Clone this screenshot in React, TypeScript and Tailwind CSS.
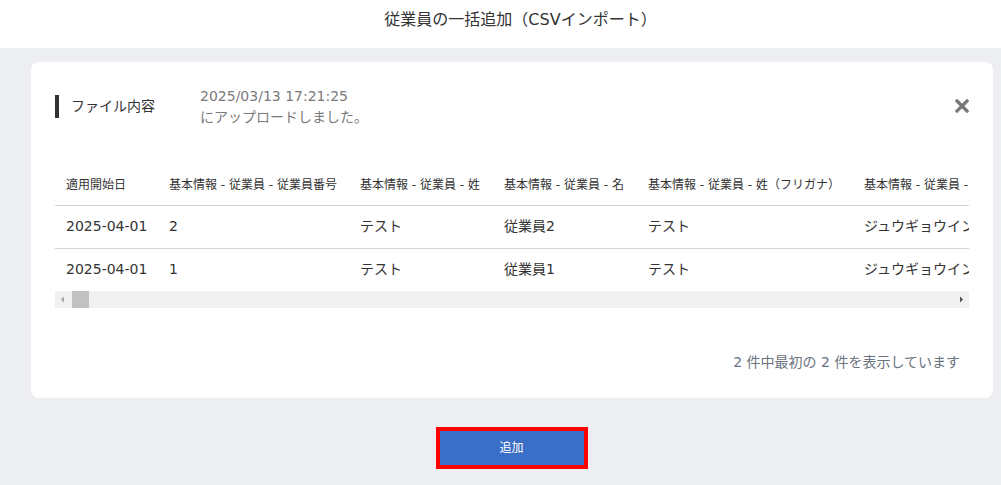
import React from 'react';

const font = { fontFamily: '"DejaVu Sans", "Noto Sans CJK JP", sans-serif' };

const columns = [
  { label: '適用開始日', w: 'w-[103px]' },
  { label: '基本情報 - 従業員 - 従業員番号', w: 'w-[191px]' },
  { label: '基本情報 - 従業員 - 姓', w: 'w-[144px]' },
  { label: '基本情報 - 従業員 - 名', w: 'w-[144px]' },
  { label: '基本情報 - 従業員 - 姓（フリガナ）', w: 'w-[216px]' },
  { label: '基本情報 - 従業員 - 名（フリガナ）', w: 'w-[216px]' },
];

const rows = [
  ['2025-04-01', '2', 'テスト', '従業員2', 'テスト', 'ジュウギョウインニ'],
  ['2025-04-01', '1', 'テスト', '従業員1', 'テスト', 'ジュウギョウインイチ'],
];

const App: React.FC = () => {
  return (
    <div className="w-[1001px] h-[485px] bg-[#edeef2] text-[#333]" style={font}>
      {/* ヘッダー */}
      <header className="h-12 bg-white flex items-center justify-center pl-[40px] pb-[9px]">
        <h1 className="text-[16px] text-[#333]">従業員の一括追加（CSVインポート）</h1>
      </header>

      <div className="pt-[14px] pl-[31px] pr-[8px]">
        {/* カード */}
        <div className="bg-white rounded-lg px-6 pt-[24px] pb-[26px] h-[336px]">
          <div className="flex items-start">
            <div className="w-[145px] flex items-center mt-[9px]">
              <span className="w-1 h-[23px] bg-[#333]" />
              <span className="ml-3 text-[14px]">ファイル内容</span>
            </div>
            <div className="text-[14px] leading-[21px] text-[#7a7a7a] flex-1">
              <div>2025/03/13 17:21:25</div>
              <div>にアップロードしました。</div>
            </div>
            <button className="mt-[13px] text-[#777]">
              <svg width="14" height="14" viewBox="0 0 14 14">
                <path d="M2 2 L12 12 M12 2 L2 12" stroke="#777" strokeWidth="3.2" strokeLinecap="square" />
              </svg>
            </button>
          </div>

          {/* テーブル */}
          <div className="mt-[37px] overflow-hidden">
            <table className="border-collapse whitespace-nowrap table-fixed w-[1014px]">
              <thead>
                <tr className="h-10 border-b border-[#d4d4d4]">
                  {columns.map((c) => (
                    <th key={c.label} className={`${c.w} pl-[11px] text-left font-normal text-[12px] text-[#333]`}>
                      <div className="overflow-hidden">{c.label}</div>
                    </th>
                  ))}
                </tr>
              </thead>
              <tbody>
                {rows.map((r, i) => (
                  <tr key={i} className={`h-[43px] ${i === 0 ? 'border-b border-[#d4d4d4]' : ''}`}>
                    {r.map((v, j) => (
                      <td key={j} className="pl-[11px] text-[14px] text-[#333]">
                        <div className="overflow-hidden">{v}</div>
                      </td>
                    ))}
                  </tr>
                ))}
              </tbody>
            </table>
          </div>
          {/* 横スクロールバー */}
          <div className="h-[17px] bg-[#f1f1f1] flex items-center">
            <svg width="17" height="17" viewBox="0 0 17 17">
              <path d="M6 8.5 L9 5.5 L9 11.5 Z" fill="#a3a3a3" />
            </svg>
            <div className="w-[17px] h-[17px] bg-[#c1c1c1]" />
            <div className="flex-1" />
            <svg width="17" height="17" viewBox="0 0 17 17">
              <path d="M11 8.5 L8 5.5 L8 11.5 Z" fill="#505050" />
            </svg>
          </div>

          <p className="mt-[44px] text-right pr-[9px] text-[14px] leading-5 text-[#6b7280]">
            2 件中最初の 2 件を表示しています
          </p>
        </div>
      </div>

      {/* 追加ボタン */}
      <div className="flex justify-center pt-[29px] pl-[22px]">
        <button className="w-[152px] h-[42px] border-4 border-[#ff0000] bg-[#3b6ec6] text-white text-[12px]">
          追加
        </button>
      </div>
    </div>
  );
};

export default App;
